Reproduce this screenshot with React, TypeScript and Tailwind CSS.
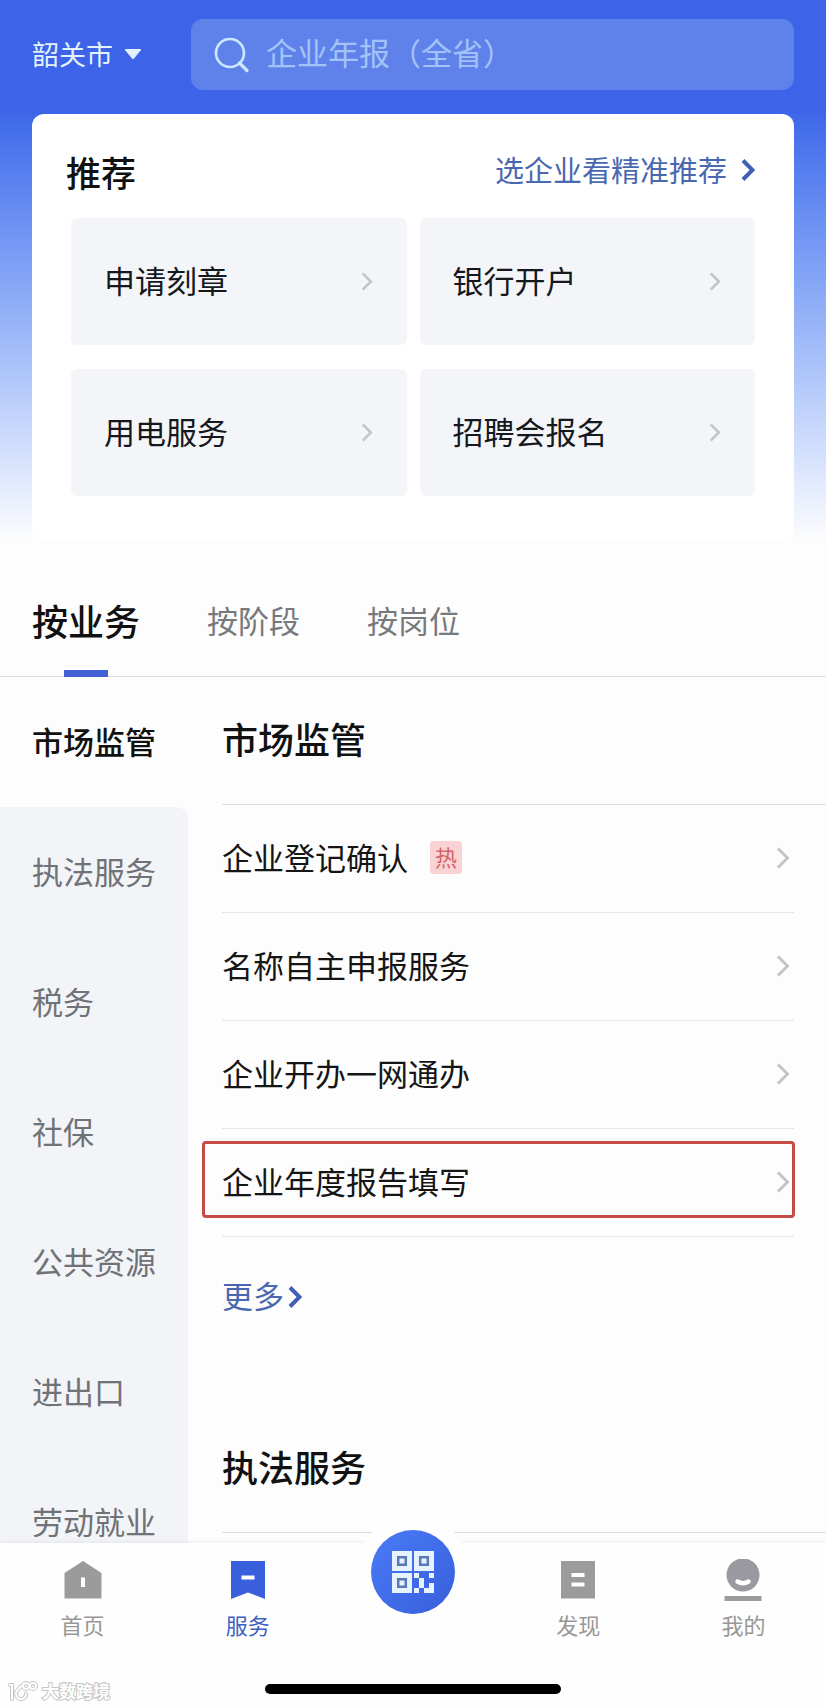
import clsx from "clsx";

const recommends = ["申请刻章", "银行开户", "用电服务", "招聘会报名"];

const tabs = ["按业务", "按阶段", "按岗位"];

const categories = [
  "市场监管",
  "执法服务",
  "税务",
  "社保",
  "公共资源",
  "进出口",
  "劳动就业",
];

const services = [
  { name: "企业登记确认", hot: true },
  { name: "名称自主申报服务" },
  { name: "企业开办一网通办" },
  { name: "企业年度报告填写", marked: true },
];

const ChevronIcon = ({ className }: { className?: string }) => (
  <svg
    viewBox="0 0 14 22"
    fill="none"
    stroke="currentColor"
    className={clsx("shrink-0", className)}
    aria-hidden="true">
    <path d="M2 1.5 11.5 11 2 20.5" />
  </svg>
);

const SearchIcon = () => (
  <svg
    viewBox="0 0 36 36"
    fill="none"
    stroke="#cfe6ff"
    className="size-9 shrink-0"
    aria-hidden="true">
    <circle cx="16" cy="16" r="14" strokeWidth="2.6" />
    <path d="M25.5 26 33 33.5" strokeWidth="3.2" strokeLinecap="round" />
  </svg>
);

const HomeIcon = () => (
  <svg viewBox="0 0 38 42" className="h-[42px] w-[38px]" aria-hidden="true">
    <path d="M19 2 37.5 14v25.500H.5V14z" fill="#9b9b9b" />
    <path d="M17 18.500h4v9.500h-4z" fill="#fff" />
  </svg>
);

const ServiceIcon = () => (
  <svg viewBox="0 0 38 42" className="h-[42px] w-[38px]" aria-hidden="true">
    <path d="M2 2h34v38l-17-6.500L2 40z" fill="#3a5fdc" />
    <path d="M12.500 16.500h13v4h-13z" fill="#fff" />
  </svg>
);

const FindIcon = () => (
  <svg viewBox="0 0 38 42" className="h-[42px] w-[38px]" aria-hidden="true">
    <path d="M2 2h34v37.500H2z" fill="#9b9b9b" />
    <path d="M12.500 14h13v4h-13zM12.500 23.500h13v4h-13z" fill="#fff" />
  </svg>
);

const MineIcon = () => (
  <svg viewBox="0 0 38 42" className="h-[42px] w-[38px]" aria-hidden="true">
    <circle cx="19" cy="16" r="16.5" fill="#9a999f" />
    <path
      d="M13.500 22.500q5.500 3.500 11 0"
      fill="none"
      stroke="#fff"
      strokeWidth="4.500"
      strokeLinecap="round"
    />
    <path d="M.5 37h37v5H.5z" fill="#9b9b9b" />
  </svg>
);

const QrIcon = () => (
  <svg viewBox="0 0 42 42" className="size-[42px]" aria-hidden="true">
    <g fill="#e6f3ff">
      <path d="M0 0h20v20H0zM22 0h20v20H22zM0 22h20v20H0z" />
      <path d="M22 22h5v5h-5zM37 22h5v5h-5zM27 27h5v10h-5zM22 37h5v5h-5zM37 32h5v10H32v-5h5z" />
    </g>
    <g fill="none" stroke="#5878b8" strokeWidth="2.5">
      <path d="M6.200 6.200h7.600v7.600H6.200zM28.200 6.200h7.600v7.600h-7.600zM6.200 28.200h7.600v7.600H6.200z" />
    </g>
  </svg>
);

const WatermarkLogo = () => (
  <svg viewBox="0 0 30 21" className="h-[21px] w-[30px]" fill="none" aria-hidden="true">
    <g stroke="#c6c6c6" strokeWidth="4" strokeLinecap="round">
      <path d="M2 4h2v14M8 11q0 8 6 7 4-1 4-5M13 5 8 11" />
      <circle cx="18" cy="5" r="3" />
      <circle cx="25" cy="5" r="3" />
    </g>
    <g stroke="#fff" strokeWidth="2" strokeLinecap="round">
      <path d="M2 4h2v14M8 11q0 8 6 7 4-1 4-5M13 5 8 11" />
      <circle cx="18" cy="5" r="3" />
      <circle cx="25" cy="5" r="3" />
    </g>
  </svg>
);

const navItems = [
  { label: "首页", icon: <HomeIcon /> },
  { label: "服务", icon: <ServiceIcon />, active: true },
  { label: "扫码" },
  { label: "发现", icon: <FindIcon /> },
  { label: "我的", icon: <MineIcon /> },
];

const Header = () => (
  <header className="flex items-center gap-[49px] bg-[#3d63e8] px-8 pt-[19px] pb-6">
    <div className="relative">
      <select
        aria-label="城市"
        className="appearance-none bg-transparent pr-[29px] pb-0.5 text-[27px] leading-9 text-[#e2f2ff] outline-none">
        <option>韶关市</option>
      </select>
      <svg
        viewBox="0 0 18 12"
        className="pointer-events-none absolute top-3 right-0 h-3 w-[18px]"
        aria-hidden="true">
        <path
          d="M2 1h14q1.500 0 .8 1.200L10 10.500q-1 1-2 0L1.200 2.200Q.5 1 2 1z"
          fill="#e2f2ff"
        />
      </svg>
    </div>
    <label className="flex h-[71px] flex-1 items-center gap-4 rounded-xl bg-[#5f82ea] pl-[23px]">
      <SearchIcon />
      <input
        type="search"
        aria-label="搜索"
        placeholder="企业年报（全省）"
        className="w-full min-w-0 bg-transparent pb-1.5 text-[31px] leading-10 text-white outline-none placeholder:text-[#a3c2f8]"
      />
    </label>
  </header>
);

const Recommend = () => (
  <section className="bg-linear-to-b from-[#3f68ea] to-[#fdfdfd] px-8">
    <div className="rounded-xl bg-white px-[39px] pt-[34px] pb-[45px]">
      <div className="-ml-[5px] flex items-center justify-between">
        <h2 className="text-[35px] leading-[48px] font-medium text-[#111]">推荐</h2>
        <a
          href="#"
          className="flex items-center gap-[14px] pb-1 text-[29px] leading-10 text-[#4a68b0]">
          <span className="pb-0.5">选企业看精准推荐</span>
          <ChevronIcon className="h-[22px] w-[14px] stroke-4 text-[#3f5fb8]" />
        </a>
      </div>
      <div className="mt-[22px] grid grid-cols-2 gap-x-[13px] gap-y-6">
        {recommends.map((item) => (
          <a
            key={item}
            href="#"
            className="flex h-[127px] items-center justify-between rounded-md bg-[#f3f5f8] pr-[34px] pl-[33px] text-[31px] leading-10 text-[#15181d]">
            <span className="pb-1">{item}</span>
            <ChevronIcon className="h-[19px] w-3 stroke-3 text-[#c3c4c8]" />
          </a>
        ))}
      </div>
    </div>
  </section>
);

const Tabs = () => (
  <div
    role="tablist"
    className="flex items-stretch gap-[67px] border-b border-[#dedede] px-8">
    {tabs.map((tab, i) => (
      <button
        key={tab}
        type="button"
        role="tab"
        aria-selected={i === 0}
        className={clsx(
          "relative pt-[55px] pb-8 leading-12",
          i === 0
            ? "text-[36px] font-medium text-[#111]"
            : "text-[31px] text-[#77797c]"
        )}>
        {tab}
        {i === 0 && (
          <span className="absolute -bottom-px left-1/2 h-[7px] w-11 -translate-x-1/2 bg-[#4261d6]" />
        )}
      </button>
    ))}
  </div>
);

const Sidebar = () => (
  <nav aria-label="分类" className="flex w-[188px] shrink-0 flex-col">
    {categories.map((item, i) => (
      <button
        key={item}
        type="button"
        className={clsx(
          "h-[130px] shrink-0 pb-0.5 pl-8 text-left text-[31px] leading-10",
          i === 0 && "font-medium text-[#111]",
          i === 1 && "rounded-tr-xl",
          i > 0 && "bg-[#f2f4f8] text-[#6f7276]"
        )}>
        {item}
      </button>
    ))}
  </nav>
);

const ServiceList = () => (
  <div className="min-w-0 flex-1 pl-[34px]">
    <h3 className="border-b border-[#dedede] pt-[37px] pb-[42px] text-[36px] leading-12 font-medium text-[#111]">
      市场监管
    </h3>
    <ul className="pr-8">
      {services.map((item) => (
        <li key={item.name} className="relative border-b border-[#e6e6e6]">
          <a
            href="#"
            className="flex h-[107px] items-center pr-1 pb-0.5 text-[31px] leading-10 text-[#151515]">
            <span className="pb-0.5">{item.name}</span>
            {item.hot && (
              <span className="ml-[22px] flex h-[33px] w-8 items-center justify-center rounded bg-[#f9d2d4] pb-1 text-[22px] leading-8 text-[#d4626a]">
                热
              </span>
            )}
            <ChevronIcon className="ml-auto h-[22px] w-[14px] stroke-3 text-[#c4c5c8]" />
          </a>
          {item.marked && (
            <span className="pointer-events-none absolute -inset-x-px top-3 -left-5 h-[77px] rounded-sm border-3 border-[#c64b47]" />
          )}
        </li>
      ))}
    </ul>
    <a
      href="#"
      className="mt-[38px] flex w-fit items-center gap-1 text-[31px] leading-10 text-[#4a68b0]">
      <span className="pb-1">更多</span>
      <ChevronIcon className="h-[22px] w-[14px] stroke-4 text-[#3f5fb8]" />
    </a>
    <h3 className="mt-[123px] border-b border-[#dedede] pb-[42px] text-[36px] leading-12 font-medium text-[#111]">
      执法服务
    </h3>
  </div>
);

const BottomNav = () => (
  <footer className="relative shrink-0 bg-[#fefefe] pb-[13px] shadow-[0_-1px_4px_rgba(0,0,0,0.07)]">
    <nav aria-label="主导航" className="grid h-[128px] grid-cols-5">
      {navItems.map((item) =>
        item.icon ? (
          <a
            key={item.label}
            href="#"
            className={clsx(
              "flex flex-col items-center gap-1.5 pt-4 text-[22px] leading-[34px]",
              item.active ? "text-[#3c5fc4]" : "text-[#979797]"
            )}>
            {item.icon}
            {item.label}
          </a>
        ) : (
          <div key={item.label} className="relative">
            <button
              type="button"
              aria-label={item.label}
              className="absolute -top-7 left-1/2 flex size-[114px] -translate-x-1/2 items-center justify-center rounded-full bg-[#fefefe]">
              <span className="flex size-[84px] items-center justify-center rounded-full bg-linear-to-br from-[#4a7bf7] to-[#385edb]">
                <QrIcon />
              </span>
            </button>
          </div>
        )
      )}
    </nav>
    <div className="mx-auto mt-[13px] h-[10px] w-[296px] rounded-full bg-black" />
    <div className="absolute bottom-1 left-2 flex items-center gap-1 text-[17px] leading-6 font-bold text-white">
      <WatermarkLogo />
      <span className="[-webkit-text-stroke:2px_#c6c6c6] [paint-order:stroke_fill]">
        大数跨境
      </span>
    </div>
  </footer>
);

const App = () => {
  return (
    <div className="flex h-screen flex-col bg-[#fdfdfd] font-['Noto_Sans_CJK_SC',sans-serif]">
      <main className="min-h-0 flex-1 overflow-y-auto [scrollbar-width:none]">
        <Header />
        <Recommend />
        <Tabs />
        <div className="flex">
          <Sidebar />
          <ServiceList />
        </div>
      </main>
      <BottomNav />
    </div>
  );
};

export default App;
